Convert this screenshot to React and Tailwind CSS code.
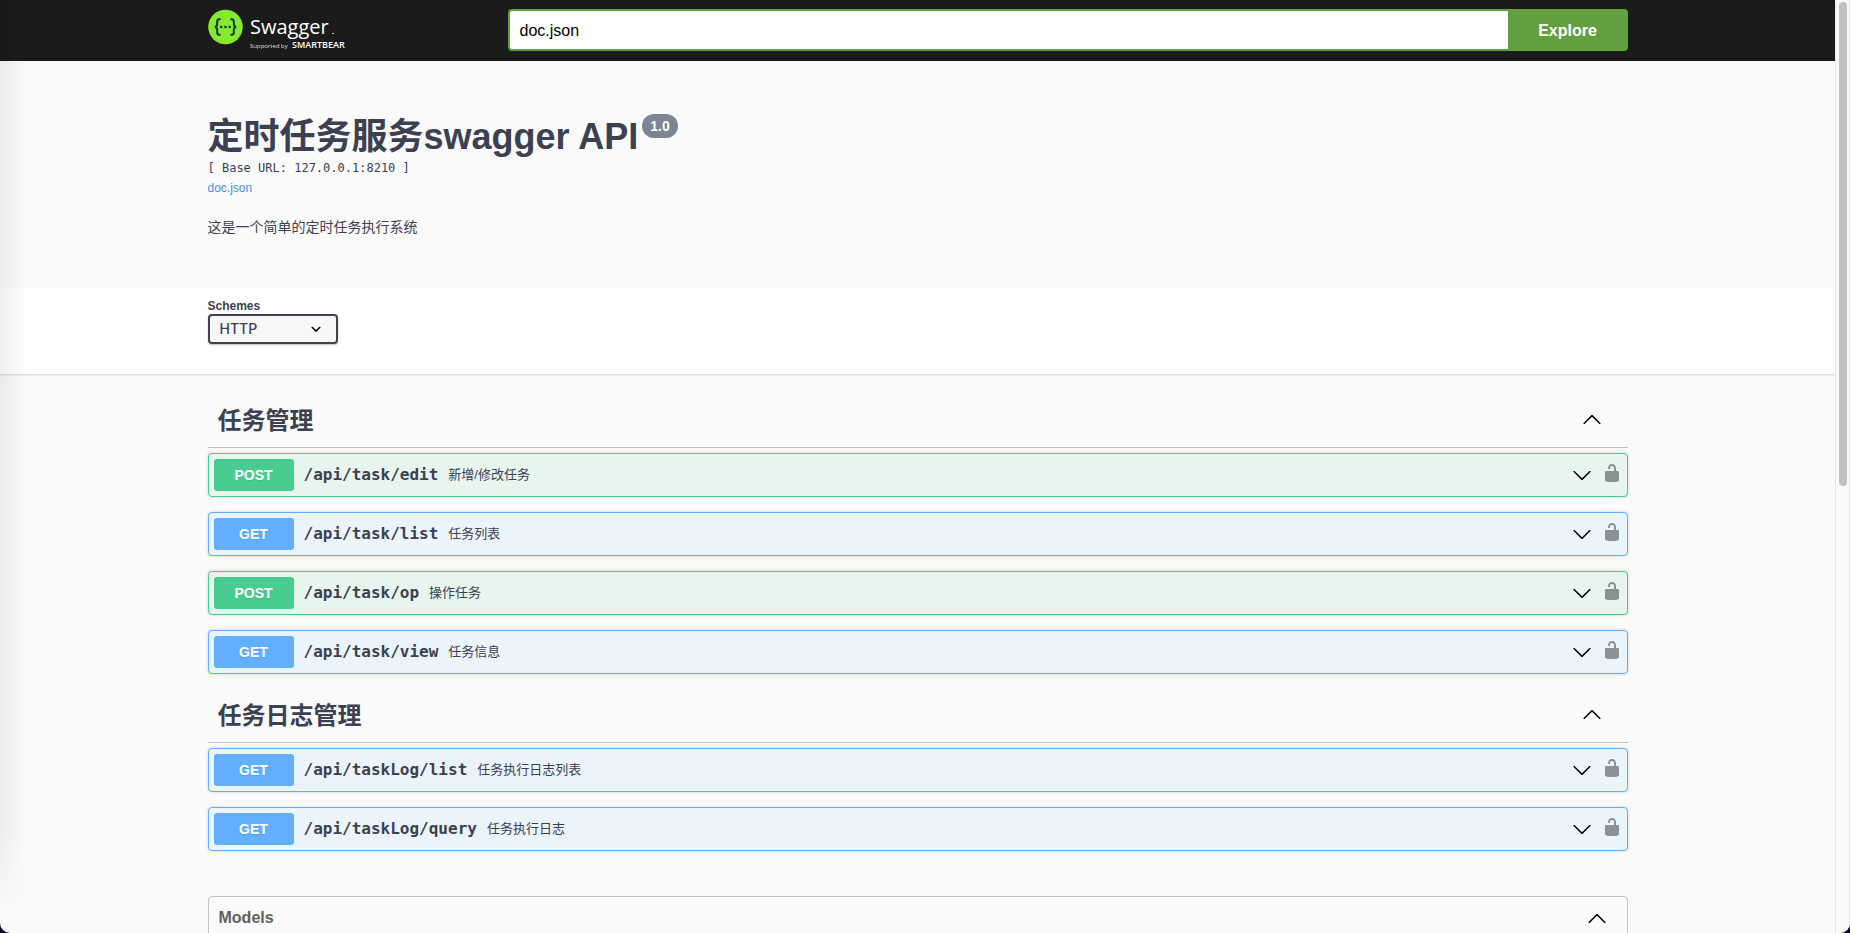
import { useState } from "react";

const TAGS = [
  {
    name: "任务管理",
    operations: [
      { method: "POST", path: "/api/task/edit", summary: "新增/修改任务" },
      { method: "GET", path: "/api/task/list", summary: "任务列表" },
      { method: "POST", path: "/api/task/op", summary: "操作任务" },
      { method: "GET", path: "/api/task/view", summary: "任务信息" },
    ],
  },
  {
    name: "任务日志管理",
    operations: [
      { method: "GET", path: "/api/taskLog/list", summary: "任务执行日志列表" },
      { method: "GET", path: "/api/taskLog/query", summary: "任务执行日志" },
    ],
  },
];

const METHOD_STYLES = {
  POST: { block: "border-[#49cc90] bg-[#e7f5ee]", badge: "bg-[#49cc90]" },
  GET: { block: "border-[#61affe] bg-[#ebf3fb]", badge: "bg-[#61affe]" },
};

function ArrowDown() {
  return (
    <svg className="size-5" viewBox="0 0 20 20" aria-hidden="true">
      <path d="M17.418 6.109c.272-.268.709-.268.979 0s.271.701 0 .969l-7.908 7.83c-.27.268-.707.268-.979 0l-7.908-7.83c-.27-.268-.27-.701 0-.969.271-.268.709-.268.979 0L10 13.25l7.418-7.141z" />
    </svg>
  );
}

function ArrowUp() {
  return (
    <svg className="size-5" viewBox="0 0 20 20" aria-hidden="true">
      <path d="M17.418 14.908c.272.268.709.268.979 0s.271-.701 0-.969l-7.908-7.831c-.27-.268-.707-.268-.979 0l-7.908 7.831c-.27.268-.27.701 0 .969.271.268.709.268.979 0L10 7.767l7.418 7.141z" />
    </svg>
  );
}

function Unlocked() {
  return (
    <svg className="size-5 opacity-40" viewBox="0 0 20 20" aria-hidden="true">
      <path d="M15.8 8H14V5.6C14 2.703 12.665 1 10 1 7.334 1 6 2.703 6 5.6V6h2v-.801C8 3.754 8.797 3 10 3c1.203 0 2 .754 2 2.199V8H4c-.553 0-1 .646-1 1.199V17c0 .549.428 1.139.951 1.307l1.197.387C5.672 18.861 6.55 19 7.1 19h5.8c.549 0 1.428-.139 1.951-.307l1.196-.387c.524-.167.953-.757.953-1.306V9.199C17 8.646 16.352 8 15.8 8z" />
    </svg>
  );
}

function Logo() {
  return (
    <svg className="h-[42px] w-[150px]" viewBox="0 0 150 42" role="img" aria-label="Swagger">
      <circle cx="17.5" cy="18" r="17.3" fill="#85ea2d" />
      <g fill="none" stroke="#173647" strokeWidth="2">
        <path d="M12.6 10.2h-1.2c-1.6 0-2.2.8-2.2 2.3v2.6c0 1.8-.7 2.7-2.4 2.9 1.7.2 2.4 1.1 2.4 2.9v2.6c0 1.5.6 2.3 2.2 2.3h1.2" />
        <path d="M22.4 10.2h1.2c1.6 0 2.2.8 2.2 2.3v2.6c0 1.8.7 2.7 2.4 2.9-1.7.2-2.4 1.1-2.4 2.9v2.6c0 1.5-.6 2.3-2.2 2.3h-1.2" />
      </g>
      <g fill="#173647">
        <circle cx="13.2" cy="18" r="1.3" />
        <circle cx="17.5" cy="18" r="1.3" />
        <circle cx="21.8" cy="18" r="1.3" />
      </g>
      <g fill="#ffffff" className="font-['Open_Sans',sans-serif]">
        <text x="42" y="25" fontSize="20">Swagger</text>
        <rect x="124" y="24" width="2" height="1" opacity=".7" />
        <text x="42" y="39" fontSize="6" opacity=".85">Supported by</text>
        <text x="84" y="39" fontSize="9" fontWeight="600">SMARTBEAR</text>
      </g>
    </svg>
  );
}

function Operation({ method, path, summary }) {
  const style = METHOD_STYLES[method];
  return (
    <div className={`flex items-center rounded border p-[5px] shadow-[0_0_3px_rgba(0,0,0,0.19)] ${style.block}`}>
      <button type="button" className="flex min-w-0 flex-1 items-center text-left">
        <span className={`w-20 rounded-[3px] text-center text-sm/8 font-bold text-white [text-shadow:0_1px_0_rgba(0,0,0,0.1)] ${style.badge}`}>
          {method}
        </span>
        <span className="px-2.5 font-['DejaVu_Sans_Mono',monospace] text-base font-bold">{path}</span>
        <span className="flex-1 text-[13px]">{summary}</span>
      </button>
      <button type="button" className="mr-2.5" aria-label={`Expand ${path}`}>
        <ArrowDown />
      </button>
      <button type="button" className="mb-1" aria-label={`Authorize ${path}`}>
        <Unlocked />
      </button>
    </div>
  );
}

function Tag({ name, operations }) {
  const [open, setOpen] = useState(true);
  return (
    <section>
      <h2 className="mb-[5px] border-b border-[#3b4151]/30">
        <button
          type="button"
          aria-expanded={open}
          onClick={() => setOpen(!open)}
          className="flex w-full items-center justify-between py-2.5 pr-[26px] pl-2.5 text-2xl/[33px] font-bold"
        >
          {name}
          <span className="mb-1">{open ? <ArrowUp /> : <ArrowDown />}</span>
        </button>
      </h2>
      {open && (
        <div className="flex flex-col gap-[15px] pb-[15px]">
          {operations.map((op) => (
            <Operation key={op.path} {...op} />
          ))}
        </div>
      )}
    </section>
  );
}

const WRAPPER = "mx-auto w-full max-w-[1460px] px-5";

export default function App() {
  const [url, setUrl] = useState("doc.json");
  return (
    <div className="h-screen bg-[#0d0620]">
      <div className="relative flex h-full overflow-hidden rounded-b-[10px] bg-[#fafafa] font-['Liberation_Sans','Noto_Sans_CJK_SC',sans-serif] text-[#3b4151]">
        <div className="min-w-0 flex-1 overflow-hidden">
          <header className="bg-[#1b1b1b] pt-[9px] pb-2.5">
            <div className={`${WRAPPER} flex items-center`}>
              <a href="#" className="mr-[150px] shrink-0">
                <Logo />
              </a>
              <form className="flex h-[42px] min-w-0 flex-1" onSubmit={(e) => e.preventDefault()}>
                <input
                  type="text"
                  aria-label="Definition URL"
                  value={url}
                  onChange={(e) => setUrl(e.target.value)}
                  className="min-w-0 flex-1 rounded-l border-2 border-r-0 border-[#62a03f] bg-white px-2.5 pt-0.5 text-base text-black outline-none"
                />
                <button type="submit" className="w-[120px] rounded-r bg-[#62a03f] pt-0.5 text-base font-bold text-white">
                  Explore
                </button>
              </form>
            </div>
          </header>

          <main>
            <div className={`${WRAPPER} pt-[53px] pb-[50px]`}>
              <div className="flex items-start gap-1">
                <h1 className="text-4xl/[46px] font-bold">定时任务服务swagger API</h1>
                <span className="rounded-full bg-[#7d8492] px-2 text-sm/6 font-bold text-white">1.0</span>
              </div>
              <p className="font-['DejaVu_Sans_Mono',monospace] text-xs/4">[ Base URL: 127.0.0.1:8210 ]</p>
              <a href="#doc.json" className="block text-xs/6 text-[#4990e2]">doc.json</a>
              <p className="mt-[17px] text-sm/5">这是一个简单的定时任务执行系统</p>
            </div>

            <div className="bg-white pt-3 pb-[30px] shadow-[0_1px_2px_rgba(0,0,0,0.15)]">
              <div className={WRAPPER}>
                <label htmlFor="schemes" className="block text-xs/[15px] font-bold">Schemes</label>
                <div className="relative w-[130px]">
                  <select
                    id="schemes"
                    className="block h-[30px] w-full appearance-none rounded border-2 border-[#41444e] bg-[#f7f7f7] px-2.5 font-['Inter',sans-serif] text-sm font-medium shadow-[0_1px_2px_rgba(0,0,0,0.25)]"
                  >
                    <option>HTTP</option>
                    <option>HTTPS</option>
                  </select>
                  <svg className="pointer-events-none absolute top-[5px] right-3 size-5" viewBox="0 0 20 20" aria-hidden="true">
                    <path d="M13.418 7.859c.271-.268.709-.268.978 0s.272.701 0 .969l-3.908 3.83c-.27.268-.707.268-.979 0l-3.908-3.83c-.27-.267-.27-.701 0-.969.271-.268.709-.268.978 0L10 11l3.418-3.141z" />
                  </svg>
                </div>
              </div>
            </div>

            <div className={`${WRAPPER} pt-5`}>
              {TAGS.map((tag) => (
                <Tag key={tag.name} {...tag} />
              ))}
              <section className="mt-[30px] rounded border border-[#3b4151]/30">
                <h2>
                  <button type="button" className="flex h-[42px] w-full items-center justify-between pr-5 pl-2.5 text-base font-bold text-[#606060]">
                    Models
                    <span className="text-black">
                      <ArrowUp />
                    </span>
                  </button>
                </h2>
                <div className="h-40" />
              </section>
            </div>
          </main>
        </div>

        <div className="w-[15px] shrink-0 border-x border-[#e8e8e8] bg-[#fafafa] px-[3px] pt-0.5" aria-hidden="true">
          <div className="h-[52%] w-2 rounded-full bg-[#c1c1c1]" />
        </div>

        <div
          className="pointer-events-none absolute inset-y-0 left-0 w-7 bg-linear-to-r from-black/6 to-transparent [mask-image:linear-gradient(to_bottom,black_88%,transparent_98%)]"
          aria-hidden="true"
        />
      </div>
    </div>
  );
}
